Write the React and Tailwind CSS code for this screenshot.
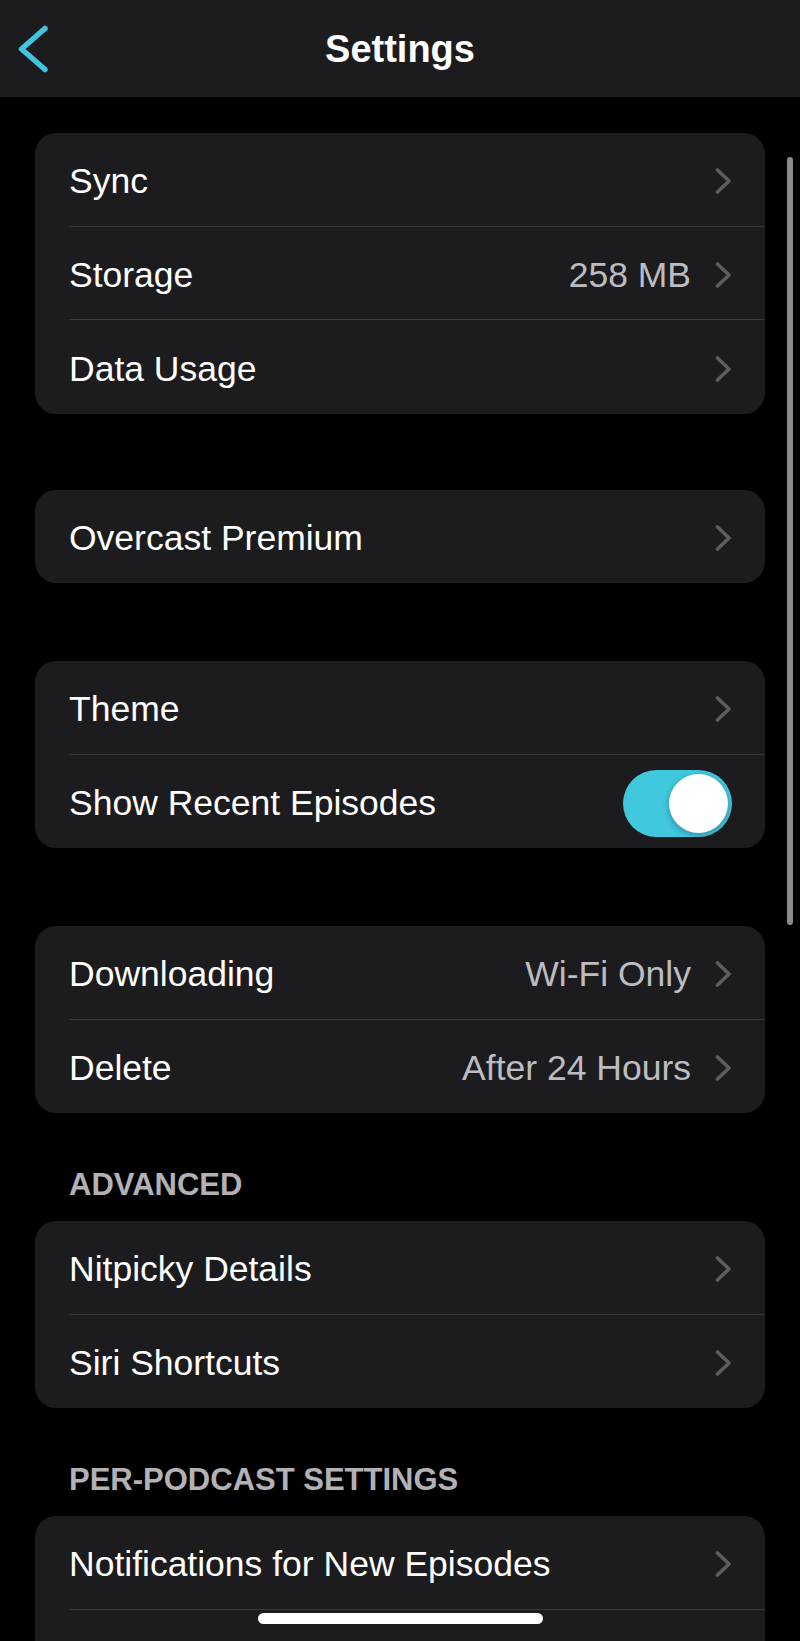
import React from "react";

const font = { fontFamily: '"Liberation Sans", Arial, sans-serif' };

function Chevron() {
  return (
    <svg width="17" height="28" viewBox="0 0 17 28" className="shrink-0">
      <polyline
        points="2.5,3 14,14 2.5,25"
        fill="none"
        stroke="#5d5d62"
        strokeWidth="3.6"
        strokeLinecap="round"
        strokeLinejoin="round"
      />
    </svg>
  );
}

function Toggle() {
  return (
    <div className="w-[109px] h-[67px] rounded-full bg-[#40c8de] flex items-center justify-end pr-[4px] shrink-0">
      <div className="w-[59px] h-[59px] rounded-full bg-white shadow-[0_2px_6px_rgba(0,0,0,0.3)]" />
    </div>
  );
}

function Row({ label, value, toggle, last }) {
  return (
    <div className="flex h-[93.5px] pl-[34px]">
      <div
        className={`flex flex-1 items-center pt-[4px] pr-[33px] ${
          last ? "" : "border-b border-[#38383a]"
        }`}
      >
        <span className="flex-1 text-white text-[35.5px] leading-[42px]">{label}</span>
        {value && (
          <span className="text-[#bcbcc1] text-[35.5px] leading-[42px] mr-[24px]">{value}</span>
        )}
        {toggle ? <Toggle /> : <Chevron />}
      </div>
    </div>
  );
}

function Card({ rows, className = "" }) {
  return (
    <div className={`bg-[#1c1c1e] rounded-[21px] overflow-hidden ${className}`}>
      {rows.map((r, i) => (
        <Row key={i} {...r} last={i === rows.length - 1} />
      ))}
    </div>
  );
}

function SectionLabel({ children }) {
  return (
    <div className="mt-[56px] mb-[21px] pl-[34px] text-[#b1b1b6] text-[31px] leading-[31px] font-semibold">
      {children}
    </div>
  );
}

export default function App() {
  return (
    <div className="relative w-[800px] h-[1641px] overflow-hidden bg-black" style={font}>
      {/* Nav bar */}
      <div className="h-[97px] bg-[#1c1c1e] grid grid-cols-[1fr_auto_1fr] items-center">
        <div className="pl-[16px] flex items-center">
          <svg width="34" height="50" viewBox="0 0 34 50">
            <polyline
              points="29,4.5 5.5,25 29,45.5"
              fill="none"
              stroke="#3ec6e0"
              strokeWidth="5.5"
              strokeLinecap="round"
              strokeLinejoin="round"
            />
          </svg>
        </div>
        <h1 className="text-white text-[38px] leading-[38px] font-semibold">Settings</h1>
        <div />
      </div>

      {/* Content */}
      <div className="px-[35px] pt-[36px]">
        <Card
          rows={[
            { label: "Sync" },
            { label: "Storage", value: "258 MB" },
            { label: "Data Usage" },
          ]}
        />
        <Card className="mt-[76px]" rows={[{ label: "Overcast Premium" }]} />
        <Card
          className="mt-[78px]"
          rows={[{ label: "Theme" }, { label: "Show Recent Episodes", toggle: true }]}
        />
        <Card
          className="mt-[78px]"
          rows={[
            { label: "Downloading", value: "Wi-Fi Only" },
            { label: "Delete", value: "After 24 Hours" },
          ]}
        />

        <SectionLabel>ADVANCED</SectionLabel>
        <Card rows={[{ label: "Nitpicky Details" }, { label: "Siri Shortcuts" }]} />

        <SectionLabel>PER-PODCAST SETTINGS</SectionLabel>
        <Card rows={[{ label: "Notifications for New Episodes" }, { label: "" }]} />
      </div>

      {/* Scroll indicator */}
      <div className="absolute left-[787px] top-[157px] w-[6px] h-[768px] rounded-full bg-[#8a8a8e]" />

      {/* Home indicator */}
      <div className="absolute left-[258px] bottom-[17px] w-[285px] h-[11px] rounded-full bg-white" />
    </div>
  );
}
